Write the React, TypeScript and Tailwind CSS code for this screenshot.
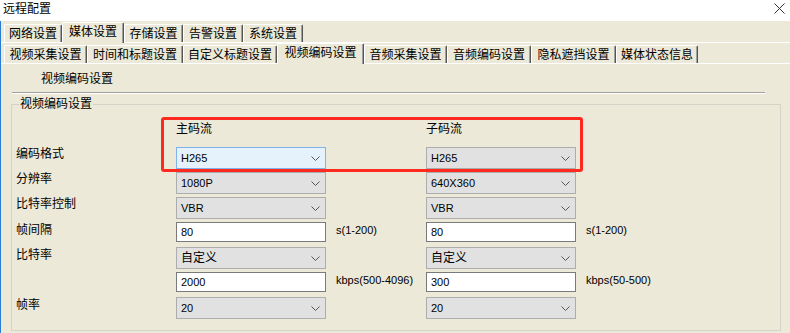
import React from 'react';

const FONT = "font-['Liberation_Sans','Noto_Sans_CJK_SC',sans-serif]";

type TabProps = { label: string; w: string; active?: boolean };

const Tab = ({ label, w, active }: TabProps) => (
    <div
        className={`${w} flex items-center justify-center shrink-0 bg-[#ece9d8] border-l border-t border-white border-r border-r-[#555555] shadow-[inset_-1px_0_0_#a0a0a0] rounded-t-[2px] text-[12px] leading-[14px] text-black ${
            active ? 'h-[21px] -mb-px relative z-10 pb-[2px]' : 'h-[18px]'
        }`}
    >
        {label}
    </div>
);

const Chevron = () => (
    <svg width="9" height="5" viewBox="0 0 9 5" className="shrink-0">
        <path d="M0.5 0.5 L4.5 4.5 L8.5 0.5" stroke="#555" strokeWidth="1" fill="none" />
    </svg>
);

type SelectProps = { value: string; active?: boolean; cjk?: boolean };

const Select = ({ value, active, cjk }: SelectProps) => (
    <div
        className={`w-[150px] h-[22px] flex items-center justify-between pl-[4px] pr-[5px] border ${
            active ? 'bg-[#e5f1fb] border-[#7eb4ea]' : 'bg-[#e1e1e1] border-[#adadad]'
        } ${cjk ? 'text-[12px]' : 'text-[11px]'}`}
    >
        <span>{value}</span>
        <Chevron />
    </div>
);

const Input = ({ value }: { value: string }) => (
    <div className="w-[150px] h-[20px] flex items-center pl-[4px] bg-white border border-[#7a7a7a] text-[11px]">
        {value}
    </div>
);

const Label = ({ text, offset }: { text?: string; offset?: boolean }) => (
    <div className={`w-[164px] pl-[4px] text-[12px] leading-[14px] ${offset ? 'mt-[1px]' : ''}`}>
        {text}
    </div>
);

const Unit = ({ text }: { text?: string }) => (
    <div className="w-[100px] pl-[10px] mt-[1px] text-[11px] leading-[14px]">{text}</div>
);

export default function App() {
    return (
        <div className={`w-[790px] h-[333px] overflow-hidden bg-white text-black ${FONT}`}>
            {/* title bar */}
            <div className="h-[21px] flex items-center justify-between pl-[3px] pr-[5px]">
                <span className="text-[12px] leading-[14px] -mt-[3px]">远程配置</span>
                <svg width="11" height="11" viewBox="0 0 11 11" className="-mt-[4px]">
                    <path d="M0.5 0.5 L10.5 10.5 M10.5 0.5 L0.5 10.5" stroke="#333" strokeWidth="1" />
                </svg>
            </div>

            <div className="h-[312px] bg-[#ece9d8] border-l border-[#2b7cd3]">
                {/* top tab row */}
                <div className="h-[22px] flex items-end pl-[3px] border-b border-white">
                    <Tab label="网络设置" w="w-[58px]" />
                    <Tab label="媒体设置" w="w-[62px]" active />
                    <Tab label="存储设置" w="w-[59px]" />
                    <Tab label="告警设置" w="w-[60px]" />
                    <Tab label="系统设置" w="w-[60px]" />
                </div>

                {/* second tab row */}
                <div className="h-[21px] flex items-end pl-[3px] border-b border-white">
                    <Tab label="视频采集设置" w="w-[83px]" />
                    <Tab label="时间和标题设置" w="w-[96px]" />
                    <Tab label="自定义标题设置" w="w-[94px]" />
                    <Tab label="视频编码设置" w="w-[87px]" active />
                    <Tab label="音频采集设置" w="w-[83px]" />
                    <Tab label="音频编码设置" w="w-[84px]" />
                    <Tab label="隐私遮挡设置" w="w-[85px]" />
                    <Tab label="媒体状态信息" w="w-[82px]" />
                </div>

                <div className="mt-[8px] pl-[40px] text-[12px] leading-[14px]">视频编码设置</div>

                <div className="mt-[6px] ml-[11px] w-[753px] border-t border-[#a0a0a0] border-b border-b-white" />

                {/* group box */}
                <div className="relative mt-[10px] ml-[10px] w-[770px] h-[227px] border border-[#d5d2c8]">
                    <span className="absolute left-[7px] -top-[8px] px-[1px] bg-[#ece9d8] text-[12px] leading-[14px]">
                        视频编码设置
                    </span>
                    <div className="absolute left-[149px] top-[12px] w-[422px] h-[55px] border-[3px] border-[#ff2a1f] rounded-[3px]" />

                    <div className="h-[42px] pt-[17px] flex text-[12px] leading-[14px]">
                        <div className="w-[164px]" />
                        <div className="w-[250px]">主码流</div>
                        <div>子码流</div>
                    </div>

                    <div className="h-[25px] flex items-start">
                        <Label text="编码格式" />
                        <Select value="H265" active />
                        <Unit />
                        <Select value="H265" />
                    </div>
                    <div className="h-[25px] flex items-start">
                        <Label text="分辨率" />
                        <Select value="1080P" />
                        <Unit />
                        <Select value="640X360" />
                    </div>
                    <div className="h-[25px] flex items-start">
                        <Label text="比特率控制" />
                        <Select value="VBR" />
                        <Unit />
                        <Select value="VBR" />
                    </div>
                    <div className="h-[25px] flex items-start">
                        <Label text="帧间隔" offset />
                        <Input value="80" />
                        <Unit text="s(1-200)" />
                        <Input value="80" />
                        <Unit text="s(1-200)" />
                    </div>
                    <div className="h-[25px] flex items-start">
                        <Label text="比特率" offset />
                        <Select value="自定义" cjk />
                        <Unit />
                        <Select value="自定义" cjk />
                    </div>
                    <div className="h-[25px] flex items-start">
                        <Label />
                        <Input value="2000" />
                        <Unit text="kbps(500-4096)" />
                        <Input value="300" />
                        <Unit text="kbps(50-500)" />
                    </div>
                    <div className="h-[25px] flex items-start">
                        <Label text="帧率" offset />
                        <Select value="20" />
                        <Unit />
                        <Select value="20" />
                    </div>
                </div>
            </div>
        </div>
    );
}
